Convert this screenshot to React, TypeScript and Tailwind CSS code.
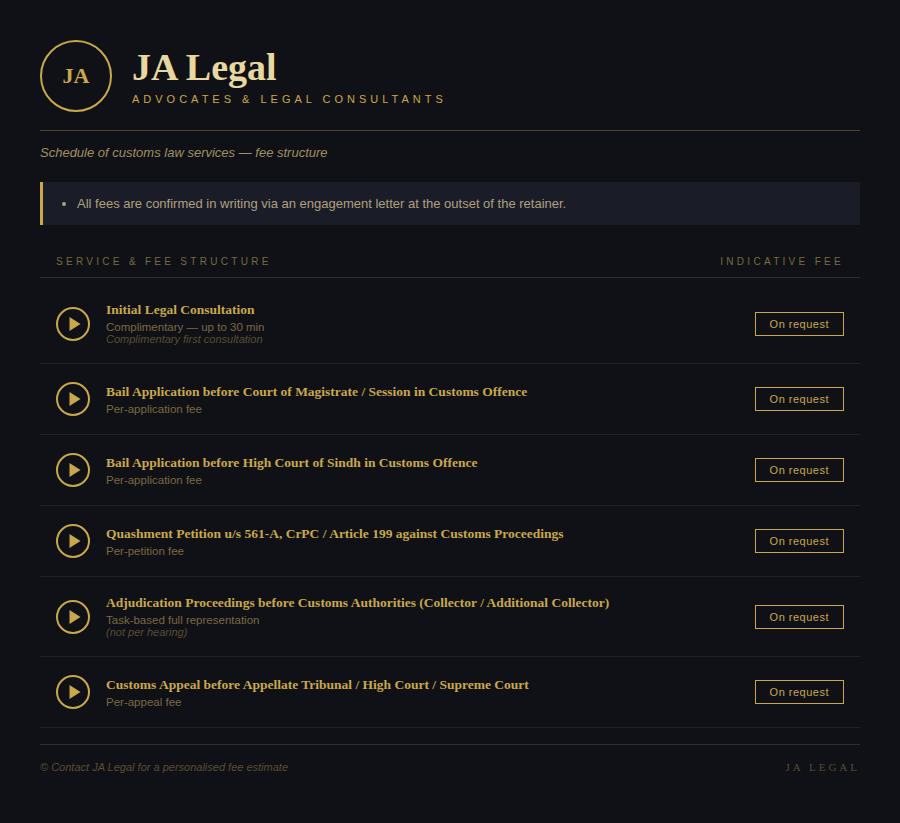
const services = [
  { title: 'Initial Legal Consultation', basis: 'Complimentary — up to 30 min', note: 'Complimentary first consultation' },
  { title: 'Bail Application before Court of Magistrate / Session in Customs Offence', basis: 'Per-application fee' },
  { title: 'Bail Application before High Court of Sindh in Customs Offence', basis: 'Per-application fee' },
  { title: 'Quashment Petition u/s 561-A, CrPC / Article 199 against Customs Proceedings', basis: 'Per-petition fee' },
  { title: 'Adjudication Proceedings before Customs Authorities (Collector / Additional Collector)', basis: 'Task-based full representation', note: '(not per hearing)' },
  { title: 'Customs Appeal before Appellate Tribunal / High Court / Supreme Court', basis: 'Per-appeal fee' },
]

function PlayIcon() {
  return (
    <div className="flex h-[34px] w-[34px] shrink-0 items-center justify-center rounded-full border-2 border-[#c9a84c]">
      <svg width="12" height="14" viewBox="0 0 12 14" className="ml-[3px]">
        <path d="M0.5 0 L11.5 7 L0.5 14 Z" fill="#c9a84c" />
      </svg>
    </div>
  )
}

export default function App() {
  return (
    <div className="min-h-[823px] bg-[#0f1117] px-10 pt-10 font-['Liberation_Sans',Arial,sans-serif]">
      {/* Header */}
      <header className="flex items-center gap-5 border-b border-[#c9a84c55] pb-[18px]">
        <div className="flex h-[72px] w-[72px] items-center justify-center rounded-full border-2 border-[#c9a84c] pb-[2px] font-['Liberation_Serif',serif] text-[22px] font-bold text-[#c9a84c]">
          JA
        </div>
        <div>
          <h1 className="font-['Liberation_Serif',serif] text-[38px] font-bold leading-[44px] text-[#e8d8a0]">JA Legal</h1>
          <p className="mt-[2px] text-[11px] tracking-[4px] text-[#c9a84c]">ADVOCATES &amp; LEGAL CONSULTANTS</p>
        </div>
      </header>

      <p className="mt-[14px] text-[13px] italic leading-[16px] text-[#a09060]">Schedule of customs law services — fee structure</p>

      {/* Notice */}
      <ul className="mt-[21px] list-disc border-l-[3px] border-[#c9a84c] bg-[#1a1d27] py-[14px] pl-[34px] pr-5 text-[13px] leading-[15px] text-[#b0a080]">
        <li>All fees are confirmed in writing via an engagement letter at the outset of the retainer.</li>
      </ul>

      {/* Table head */}
      <div className="mt-[31px] flex justify-between border-b border-[#2a2d3a] px-4 pb-[9px] text-[10px] leading-[12px] tracking-[3.3px] text-[#7a6a40]">
        <span>SERVICE &amp; FEE STRUCTURE</span>
        <span>INDICATIVE FEE</span>
      </div>

      {/* Rows */}
      <div className="mt-[6px]">
        {services.map((s) => (
          <div key={s.title} className="flex items-center gap-4 border-b border-[#1e2130] px-4 py-[18px]">
            <PlayIcon />
            <div className="min-w-0 flex-1">
              <div className="font-['Liberation_Serif',serif] text-[13.5px] font-bold leading-[16px] text-[#c9a84c]">{s.title}</div>
              <div className="mt-[4px] text-[11.5px] leading-[10px] text-[#7a6a40]">{s.basis}</div>
              {s.note && <div className="mt-[2px] text-[11px] italic leading-[11px] text-[#5a4e30]">{s.note}</div>}
            </div>
            <div className="border border-[#c9a84c] px-[14px] py-[4px] text-[11px] leading-[14px] tracking-[0.5px] text-[#c9a84c]">On request</div>
          </div>
        ))}
      </div>

      {/* Footer */}
      <footer className="mt-4 flex items-center justify-between border-t border-[#2a2d3a] pt-4 text-[11px] leading-[13px] text-[#5a4e30]">
        <span className="italic">© Contact JA Legal for a personalised fee estimate</span>
        <span className="font-['Liberation_Serif',serif] tracking-[3px]">JA LEGAL</span>
      </footer>
    </div>
  )
}
